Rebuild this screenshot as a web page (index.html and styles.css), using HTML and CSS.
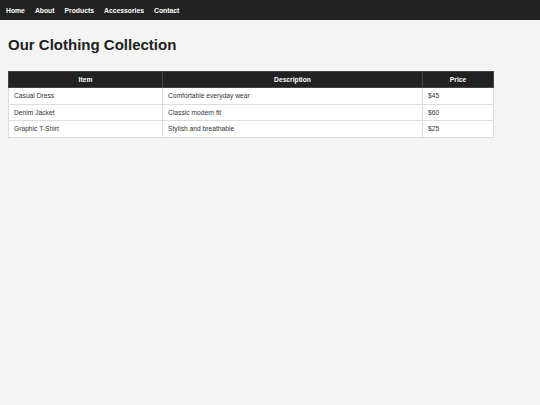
FILE: index.html
```html
<!DOCTYPE html>
<html lang="en">
<head>
  <meta charset="UTF-8">
  <meta name="viewport" content="width=device-width, initial-scale=1.0">
  <title>Our Clothing Collection</title>
  <link rel="stylesheet" href="styles.css">
</head>
<body>
  <nav class="topnav">
    <a href="#">Home</a>
    <a href="#">About</a>
    <a href="#">Products</a>
    <a href="#">Accessories</a>
    <a href="#">Contact</a>
  </nav>
  <main class="content">
    <h1>Our Clothing Collection</h1>
    <table class="products">
      <thead>
        <tr><th class="col-item">Item</th><th class="col-desc">Description</th><th>Price</th></tr>
      </thead>
      <tbody>
        <tr><td>Casual Dress</td><td>Comfortable everyday wear</td><td>$45</td></tr>
        <tr><td>Denim Jacket</td><td>Classic modern fit</td><td>$60</td></tr>
        <tr><td>Graphic T-Shirt</td><td>Stylish and breathable</td><td>$25</td></tr>
      </tbody>
    </table>
  </main>
</body>
</html>
```
FILE: styles.css
```css
body {
  font-family: 'Liberation Sans', Arial, sans-serif;
  background: #f4f4f4;
  color: #222;
  margin: 0;
}
.topnav {
  background: #222;
  height: 20px;
  display: flex;
  align-items: center;
  gap: 10px;
  padding: 0 6px;
}
.topnav a {
  color: #fff;
  text-decoration: none;
  font-weight: bold;
  font-size: 6.8px;
}
.content { padding: 16px 8px; }
h1 {
  font-size: 15px;
  margin: 0 0 18px 0;
  color: #222;
}
.products {
  width: 486px;
  border-collapse: collapse;
  background: #fff;
  font-size: 6.7px;
}
.products th, .products td {
  border: 1px solid #ddd;
  padding: 4px 5px;
  line-height: 7.4px;
}
.products th {
  background: #222;
  color: #fff;
  border-color: #444;
  text-align: center;
}
.col-item { width: 143px; }
.col-desc { width: 249px; }
.products td { color: #333; }
```
